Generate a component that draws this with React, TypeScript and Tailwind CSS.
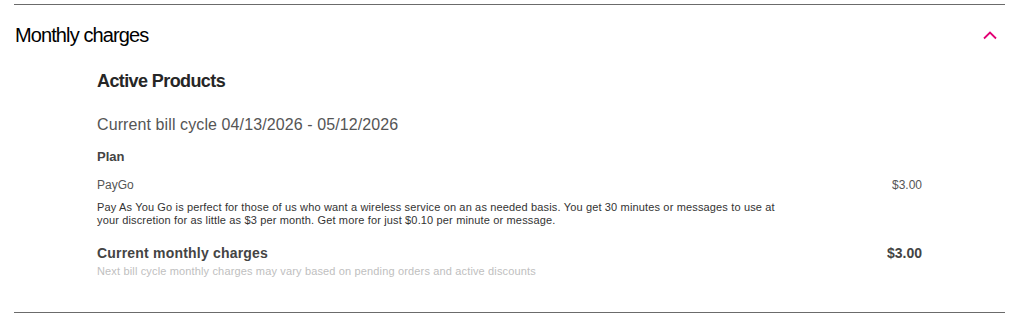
export default function App() {
  return (
    <div className="w-[1025px] h-[313px] bg-white font-['Liberation_Sans',Arial,sans-serif] overflow-hidden">
      <div className="ml-[14px] mr-[20px] mt-[4px] border-t border-[#6b6b6b]">
        <button className="w-full flex items-center justify-between pl-[1px] pr-[8px] h-[60px]">
          <span className="text-[20px] text-black tracking-[-0.9px]">Monthly charges</span>
          <svg width="14" height="9" viewBox="0 0 14 9" fill="none">
            <path d="M1 7.5 L7 1.5 L13 7.5" stroke="#e20074" strokeWidth="1.8" />
          </svg>
        </button>
        <div className="pl-[83px] pr-[83px] pb-[34px] border-b border-[#6b6b6b]">
          <h2 className="text-[18px] font-bold text-[#262626] leading-[24px] pt-[4px] tracking-[-0.6px]">Active Products</h2>
          <p className="text-[16px] text-[#555] mt-[22px] leading-[20px] tracking-[0.1px]">Current bill cycle 04/13/2026 - 05/12/2026</p>
          <p className="text-[13px] font-bold text-[#444] mt-[14px] leading-[16px]">Plan</p>
          <div className="flex justify-between mt-[12px]">
            <div className="w-[690px]">
              <p className="text-[12px] text-[#555] leading-[16px]">PayGo</p>
              <p className="text-[11px] text-[#333] leading-[13px] mt-[8px] tracking-[0.15px]">
                Pay As You Go is perfect for those of us who want a wireless service on an as needed basis. You get 30 minutes or messages to use at your discretion for as little as $3 per month. Get more for just $0.10 per minute or message.
              </p>
            </div>
            <p className="text-[12px] text-[#555] leading-[16px]">$3.00</p>
          </div>
          <div className="flex justify-between mt-[17px]">
            <p className="text-[14px] font-bold text-[#444] leading-[18px] tracking-[0.2px]">Current monthly charges</p>
            <p className="text-[14px] font-bold text-[#444] leading-[18px]">$3.00</p>
          </div>
          <p className="text-[11px] text-[#c0c0c0] leading-[14px] mt-[2px] tracking-[0.15px]">Next bill cycle monthly charges may vary based on pending orders and active discounts</p>
        </div>
      </div>
    </div>
  );
}
